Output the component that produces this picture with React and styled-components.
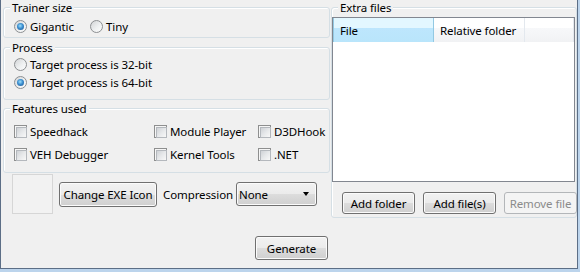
import React from 'react';
import styled, { createGlobalStyle } from 'styled-components';

const Global = createGlobalStyle`
  html, body { margin: 0; padding: 0; background: #f0f0f0; }
  body {
    font-family: "Noto Sans", "Liberation Sans", sans-serif;
    font-size: 11.5px;
    letter-spacing: -0.1px;
    color: #000;
  }
  * { box-sizing: border-box; }
`;

const Frame = styled.div`
  width: 580px;
  height: 272px;
  background: #bcd4ec;
  padding: 0 2px 3px 0;
`;

const Client = styled.div`
  width: 578px;
  height: 269px;
  background: #f0f0f0;
  border-left: 1px solid #5c6e86;
  border-right: 1px solid #5c6e86;
  border-bottom: 1px solid #5c6e86;
  display: flex;
  overflow: hidden;
`;

const LeftCol = styled.div`
  width: 330px;
  flex: none;
  padding: 0 1px 0 2px;
  display: flex;
  flex-direction: column;
`;

const RightCol = styled.div`
  width: 246px;
  flex: none;
  display: flex;
  flex-direction: column;
`;

const Group = styled.fieldset`
  margin: ${p => p.$mt || 0}px 0 0 0;
  padding: 0;
  border: 1px solid #d5dfe5;
  border-radius: 3px;
  box-shadow: inset 1px 1px 0 #fff;
  min-width: 0;
`;

const Legend = styled.legend`
  margin-left: 6px;
  padding: 0 2px;
  line-height: 15px;
  height: 15px;
  background: #f0f0f0;
`;

const GroupBody = styled.div`
  padding: ${p => p.$pad};
`;

const Row = styled.div`
  display: flex;
  align-items: center;
  height: ${p => p.$h}px;
`;

const Option = styled.label`
  display: flex;
  align-items: center;
  gap: 3px;
  width: ${p => (p.$w ? `${p.$w}px` : 'auto')};
  white-space: nowrap;
`;

const Radio = styled.span`
  width: 13px;
  height: 13px;
  flex: none;
  border-radius: 50%;
  border: 1px solid #8c8f92;
  background: linear-gradient(135deg, #d2d4d6 0%, #eef0f1 55%, #fdfdfd 100%);
  display: inline-flex;
  align-items: center;
  justify-content: center;
  &::after {
    content: '';
    width: 7px;
    height: 7px;
    border-radius: 50%;
    background: ${p =>
      p.$checked
        ? 'radial-gradient(circle at 45% 40%, #9fe0fb 0%, #3c8fd0 45%, #1b4f8a 100%)'
        : 'transparent'};
  }
`;

const Check = styled.span`
  width: 13px;
  height: 13px;
  flex: none;
  border: 1px solid #8e8f8f;
  background: #f6f6f6;
  padding: 1px;
  &::after {
    content: '';
    display: block;
    width: 9px;
    height: 9px;
    border: 1px solid #b4b8bd;
    background: linear-gradient(135deg, #cfd2d6 0%, #e6e8ea 50%, #f8f8f8 100%);
  }
`;

const CheckGrid = styled.div`
  display: grid;
  grid-template-columns: 140px 104px auto;
  grid-auto-rows: 23px;
  align-items: center;
`;

const Button = styled.button`
  font: inherit;
  letter-spacing: inherit;
  color: #000;
  width: ${p => p.$w}px;
  height: ${p => p.$h}px;
  padding: 0;
  border: 1px solid #707070;
  border-radius: 3px;
  background: linear-gradient(#f2f2f2 0%, #ebebeb 50%, #dddddd 50%, #cfcfcf 100%);
  box-shadow: inset 0 0 0 1px #fbfbfb;
  flex: none;
  &:disabled {
    color: #8b8b8b;
    border-color: #b3b6b9;
    background: #f4f4f4;
    box-shadow: none;
  }
`;

const IconRow = styled.div`
  display: flex;
  align-items: center;
  height: 40px;
  margin-top: 1px;
  padding-left: 9px;
`;

const IconBox = styled.div`
  width: 41px;
  height: 40px;
  border: 1px solid #d6d6d6;
  background: #f2f2f2;
  margin-right: 6px;
  flex: none;
`;

const Label = styled.span`
  margin: 0 3px 0 6px;
  white-space: nowrap;
`;

const Select = styled.div`
  width: 81px;
  height: 24px;
  border: 1px solid #707070;
  border-radius: 3px;
  background: linear-gradient(#f2f2f2 0%, #ebebeb 50%, #dddddd 50%, #cfcfcf 100%);
  box-shadow: inset 0 0 0 1px #fbfbfb;
  display: flex;
  align-items: center;
  justify-content: space-between;
  padding: 0 7px 0 2px;
`;

const Caret = styled.span`
  width: 0;
  height: 0;
  border-left: 3.5px solid transparent;
  border-right: 3.5px solid transparent;
  border-top: 4px solid #000;
`;

const GenerateRow = styled.div`
  display: flex;
  justify-content: flex-end;
  margin: 22px 2px 0 0;
`;

const List = styled.div`
  margin: 2px 1px 0 0;
  height: 165px;
  border: 1px solid #828790;
  background: #fff;
`;

const Header = styled.div`
  display: flex;
  height: 24px;
`;

const HeaderCell = styled.div`
  width: ${p => (p.$w ? `${p.$w}px` : 'auto')};
  flex: ${p => (p.$w ? 'none' : '1')};
  display: flex;
  align-items: center;
  padding-left: 6px;
  white-space: nowrap;
  border-right: 1px solid ${p => (p.$hot ? '#93c9e3' : '#e3e8ee')};
  border-left: ${p => (p.$hot ? '1px solid #93c9e3' : 'none')};
  background: ${p =>
    p.$hot
      ? 'linear-gradient(#e3f7ff 0%, #e3f7ff 40%, #bde6fd 41%, #b9e5fb 100%)'
      : 'linear-gradient(#ffffff 0%, #ffffff 40%, #f7f8fa 41%, #f1f2f4 100%)'};
`;

const ButtonRow = styled.div`
  display: flex;
  gap: 8px;
  margin-top: 10px;
  padding: 0 0 3px 10px;
`;

export default function App() {
  return (
    <Frame>
      <Global />
      <Client>
        <LeftCol>
          <Group>
            <Legend>Trainer size</Legend>
            <GroupBody $pad="3px 0 3px 10px">
              <Row $h={16}>
                <Option $w={76}><Radio $checked />Gigantic</Option>
                <Option><Radio />Tiny</Option>
              </Row>
            </GroupBody>
          </Group>
          <Group $mt={2}>
            <Legend>Process</Legend>
            <GroupBody $pad="0 0 8px 10px">
              <Row $h={18}><Option><Radio />Target process is 32-bit</Option></Row>
              <Row $h={18}><Option><Radio $checked />Target process is 64-bit</Option></Row>
            </GroupBody>
          </Group>
          <Group $mt={1}>
            <Legend>Features used</Legend>
            <GroupBody $pad="4px 0 6px 10px">
              <CheckGrid>
                <Option><Check />Speedhack</Option>
                <Option><Check />Module Player</Option>
                <Option><Check />D3DHook</Option>
                <Option><Check />VEH Debugger</Option>
                <Option><Check />Kernel Tools</Option>
                <Option><Check />.NET</Option>
              </CheckGrid>
            </GroupBody>
          </Group>
          <IconRow>
            <IconBox />
            <Button $w={98} $h={25}>Change EXE Icon</Button>
            <Label>Compression</Label>
            <Select>
              <span>None</span>
              <Caret />
            </Select>
          </IconRow>
          <GenerateRow>
            <Button $w={73} $h={24}>Generate</Button>
          </GenerateRow>
        </LeftCol>
        <RightCol>
          <Group>
            <Legend>Extra files</Legend>
            <List>
              <Header>
                <HeaderCell $w={101} $hot>File</HeaderCell>
                <HeaderCell $w={91}>Relative folder</HeaderCell>
                <HeaderCell />
              </Header>
            </List>
            <ButtonRow>
              <Button $w={73} $h={22}>Add folder</Button>
              <Button $w={73} $h={22}>Add file(s)</Button>
              <Button $w={73} $h={22} disabled>Remove file</Button>
            </ButtonRow>
          </Group>
        </RightCol>
      </Client>
    </Frame>
  );
}
